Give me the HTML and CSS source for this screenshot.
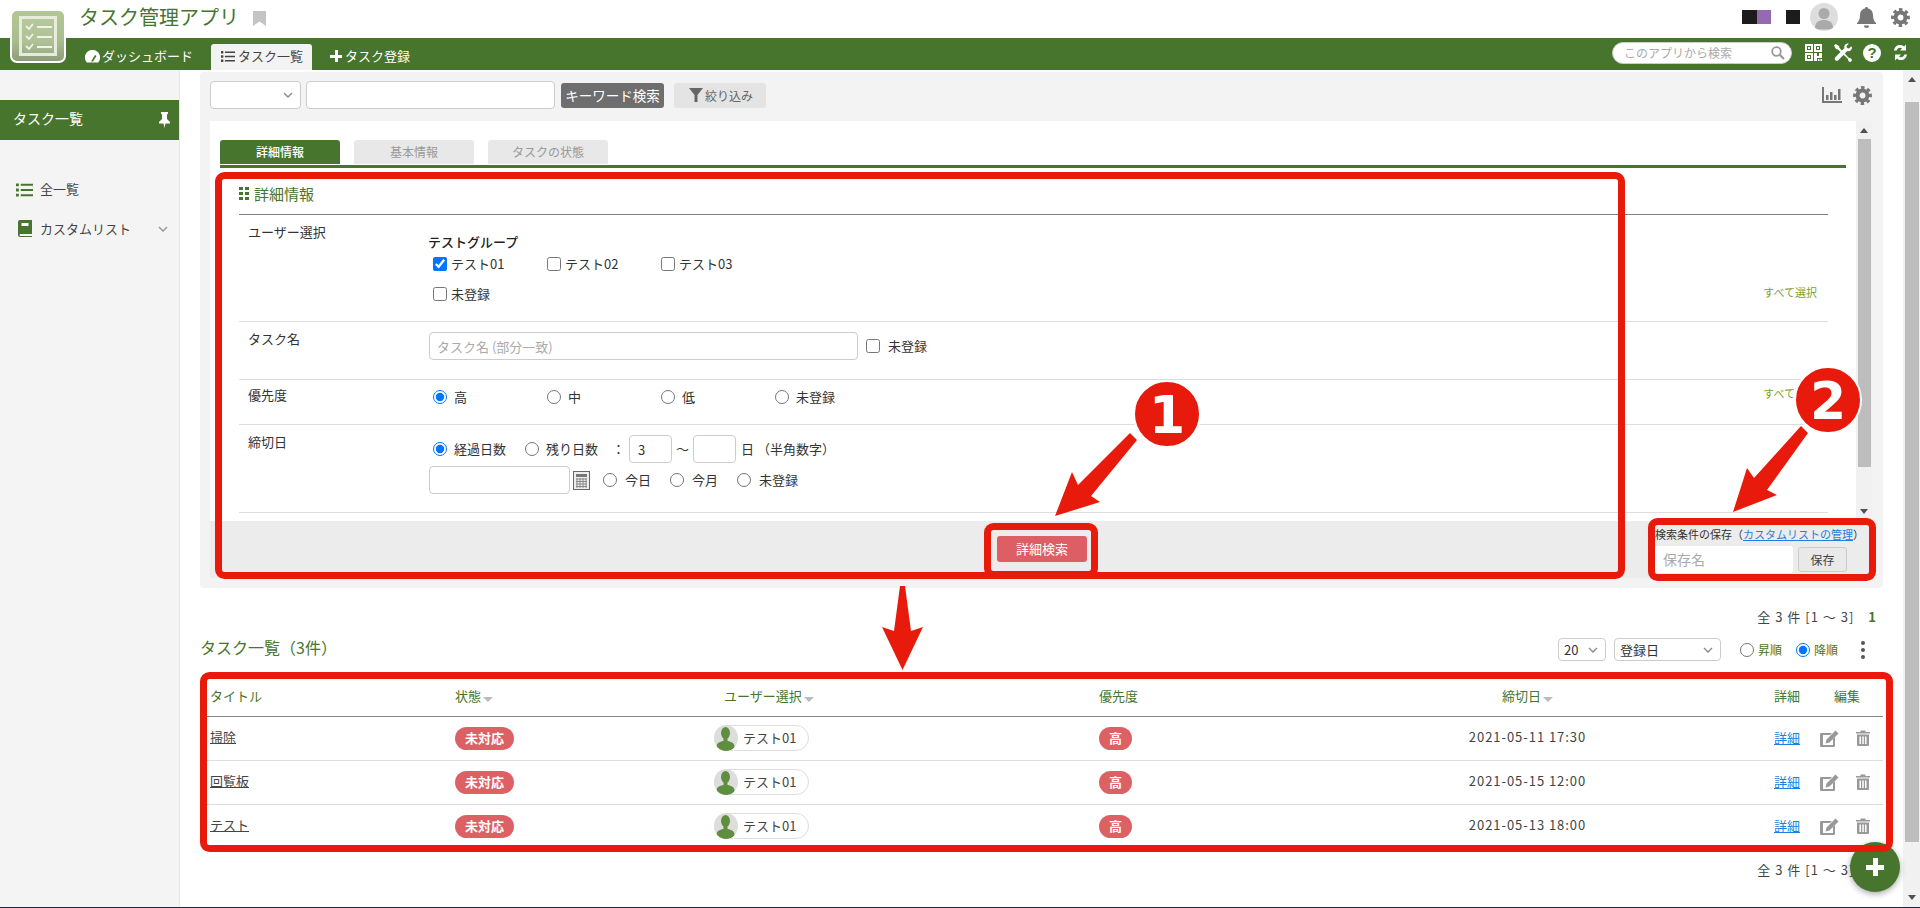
FILE: index.html
```html
<!DOCTYPE html>
<html lang="ja">
<head>
<meta charset="utf-8">
<title>タスク管理アプリ</title>
<link rel="stylesheet" href="styles.css">
</head>
<body>
<svg class="sprite" aria-hidden="true">
  <symbol id="gear" viewBox="0 0 20 20"><circle cx="10" cy="10" r="5.2" fill="none" stroke="currentColor" stroke-width="4.2"/><circle cx="10" cy="10" r="8" fill="none" stroke="currentColor" stroke-width="3.8" stroke-dasharray="3.4 2.88" transform="rotate(-12 10 10)"/></symbol>
  <symbol id="list" viewBox="0 0 18 14"><path d="M0 0h3v3H0zM0 5.5h3v3H0zM0 11h3v3H0zM5 .5h13v2H5zM5 6h13v2H5zM5 11.500h13v2H5z" fill="currentColor"/></symbol>
  <symbol id="edit" viewBox="0 0 19 17"><path d="M2 3h10l-2 2H3v10h10V9l2-2v9a1 1 0 0 1-1 1H1a1 1 0 0 1-1-1V4a1 1 0 0 1 1-1z" fill="currentColor"/><path d="M15.500 0.500 18.500 3.500 9.500 12.500 5.500 13.500 6.500 9.500z" fill="currentColor"/></symbol>
  <symbol id="trash" viewBox="0 0 14 16"><path d="M0 2h4.500V.5h5V2H14v1.500H0zM1 4.500h12V15a1 1 0 0 1-1 1H2a1 1 0 0 1-1-1zM3.500 6.500v7.500h1.500V6.500zM6.300 6.500v7.500h1.500V6.500zM9 6.500v7.500h1.500V6.500z" fill="currentColor" fill-rule="evenodd"/></symbol>
  <symbol id="person" viewBox="0 0 23 26"><ellipse cx="11.500" cy="8" rx="4.500" ry="6" fill="currentColor"/><path d="M9.500 13h4v3c4 .5 7 2.500 7 5.500S16.500 26 11.500 26 2.500 24.500 2.500 21.500 5.500 16.500 9.500 16z" fill="currentColor"/></symbol>
</svg>

<header class="topbar">
  <div class="app-title">タスク管理アプリ</div>
  <svg class="bookmark" viewBox="0 0 13 15"><path d="M0 0h13v15L6.500 10.500 0 15z" fill="#c4c4c4"/></svg>
  <div class="top-right">
    <span class="sq sq-dark"></span><span class="sq sq-purple"></span>
    <span class="sq sq-dark sq-gap"></span>
    <span class="avatar"><svg viewBox="0 0 28 28"><circle cx="14" cy="10.500" r="5.500" fill="#aaa"/><path d="M5 25c0-6 4-8 9-8s9 2 9 8c-2 2-16 2-18 0z" fill="#aaa"/></svg></span>
    <svg class="ic-bell" viewBox="0 0 19 21"><path d="M9.500 0c1 0 1.500.7 1.500 1.500 3.500.7 5 3.500 5 7 0 3.500 1 5.500 3 7.500v1H0v-1c2-2 3-4 3-7.500s1.500-6.300 5-7C8 .7 8.500 0 9.500 0z" fill="#777"/><path d="M7 18.500h5a2.500 2.500 0 0 1-5 0z" fill="#777"/></svg>
    <svg class="ic-gear"><use href="#gear"/></svg>
  </div>
</header>

<nav class="navbar">
  <a class="nav-item"><svg class="ic-gauge" viewBox="0 0 15 13"><path d="M7.500 0A7.500 7.500 0 0 0 1.800 12.500h11.400A7.500 7.500 0 0 0 7.500 0z" fill="#fff"/><path d="M6 11.500 10 5l1.500 1-3.500 5.500z" fill="#47752d"/></svg>ダッシュボード</a>
  <a class="nav-item nav-active"><svg class="ic-nav-list"><use href="#list"/></svg>タスク一覧</a>
  <a class="nav-item nav-add"><span class="plus"></span>タスク登録</a>
  <div class="nav-right">
    <div class="app-search"><span>このアプリから検索</span>
      <svg viewBox="0 0 14 14"><circle cx="5.500" cy="5.500" r="4.300" fill="none" stroke="#999" stroke-width="1.800"/><path d="M8.700 8.700 13 13" stroke="#999" stroke-width="2.200"/></svg>
    </div>
    <svg class="ic-qr" viewBox="0 0 17 17"><path fill-rule="evenodd" fill="#fff" d="M0 0h8v8H0zM2 2v4h4V2zM9 0h8v8H9zM11 2v4h4V2zM0 9h8v8H0zM2 11v4h4v-4zM9 9h3v3h2V9h3v5h-5v3H9zM13 15h1.500v2H13zM15.500 15H17v2h-1.500z"/><path fill="#fff" d="M3 3h2v2H3zM12 3h2v2h-2zM3 12h2v2H3z"/></svg>
    <svg class="ic-tools" viewBox="0 0 20 20"><path d="M1 2.500 2.500 1 6 3l.5 2L16 15c1.500-.5 3 1 3 2.500l-1.500 1.500c-1.500 0-3-1.500-2.500-3L5 6.500l-2-.5z" fill="#fff"/><path d="M19 4.500c0 2.500-2.500 4.300-4.700 3.500L5 17.500A2.200 2.200 0 0 1 2 14.500L11.500 5C10.700 2.800 12.500.5 15 .5l.8.2-2.300 2.300.5 2 2 .5 2.300-2.300z" fill="#fff"/></svg>
    <svg class="ic-help" viewBox="0 0 18 18"><circle cx="9" cy="9" r="9" fill="#fff"/><text x="9" y="14" text-anchor="middle" class="help-q">?</text></svg>
    <svg class="ic-sync" viewBox="0 0 15 17"><path d="M1 6.500C1.500 3 4 1 7 1c1.500 0 3 .5 4 1.500L13 .5V6.500H7l2-2C8.500 4 7.800 3.700 7 3.700 5.500 3.700 4 4.800 3.700 6.500z" fill="#fff"/><path d="M14 10.500C13.500 14 11 16 8 16c-1.500 0-3-.5-4-1.500L2 16.500V10.500h6l-2 2c.5.500 1.200.8 2 .8 1.500 0 3-1.100 3.300-2.800z" fill="#fff"/></svg>
  </div>
</nav>

<div class="logo">
  <div class="logo-inner">
    <svg viewBox="0 0 28 30"><g fill="none" stroke="#f1f3e8" stroke-width="1.800"><path d="M1 5l3 3 4-5M1 15l3 3 4-5M1 25l3 3 4-5"/><path d="M12 6h15M12 16h15M12 26h15"/></g></svg>
  </div>
</div>

<div class="layout">
  <aside class="sidebar">
    <div class="side-head"><span>タスク一覧</span>
      <svg viewBox="0 0 11 16"><path d="M2 0h7v1.500L8 2.500V7l3 3v1.500H6.500L5.500 16l-1-4.500H0V10l3-3V2.500L2 1.500z" fill="#fff"/></svg>
    </div>
    <ul class="side-list">
      <li><svg class="ic-side-list"><use href="#list"/></svg>全一覧</li>
      <li><svg class="ic-book" viewBox="0 0 14 17"><path d="M2 0h12v14H2.500a1 1 0 0 0 0 2H14v1H2a2 2 0 0 1-2-2V2a2 2 0 0 1 2-2z" fill="#47752d"/><rect x="3.500" y="3" width="7" height="3" fill="#fff"/></svg>カスタムリスト
        <svg class="chev" viewBox="0 0 10 6"><path d="M1 1l4 4 4-4" fill="none" stroke="#999" stroke-width="1.500"/></svg></li>
    </ul>
  </aside>

  <main class="main">
    <section class="panel">
      <div class="toolbar">
        <select class="sel kw-select"><option></option></select>
        <input class="kw-input" type="text">
        <button class="btn-kw">キーワード検索</button>
        <button class="btn-filter"><svg viewBox="0 0 14 14"><path d="M0 0h14L8.500 7v7h-3V7z" fill="#666"/></svg>絞り込み</button>
        <div class="tool-right">
          <svg class="ic-chart" viewBox="0 0 20 16"><path d="M0 0h2v14h18v2H0z" fill="#777"/><path d="M4 8h2.500v5H4zM8 5h2.500v8H8zM12 8h2.500v5H12zM16 2h2.500v11H16z" fill="#777"/></svg>
          <svg class="ic-gear"><use href="#gear"/></svg>
        </div>
      </div>

      <div class="detail">
        <div class="detail-scroll">
          <div class="tabs">
            <a class="tab tab-on">詳細情報</a>
            <a class="tab">基本情報</a>
            <a class="tab">タスクの状態</a>
          </div>
          <div class="section">
            <h2 class="sec-title"><svg viewBox="0 0 10 13"><path d="M0 0h4v3H0zM6 0h4v3H6zM0 5h4v3H0zM6 5h4v3H6zM0 10h4v3H0zM6 10h4v3H6z" fill="#47752d"/></svg>詳細情報</h2>

            <div class="row r-user">
              <div class="label">ユーザー選択</div>
              <div class="field">
                <div class="group-name">テストグループ</div>
                <div class="opts">
                  <label class="opt opt-c"><input type="checkbox" checked>テスト01</label>
                  <label class="opt opt-c"><input type="checkbox">テスト02</label>
                  <label class="opt opt-c"><input type="checkbox">テスト03</label>
                </div>
                <div class="opts opts-2"><label class="opt opt-c"><input type="checkbox">未登録</label></div>
              </div>
              <a class="select-all sa-user">すべて選択</a>
            </div>

            <div class="row r-name">
              <div class="label">タスク名</div>
              <div class="field field-name">
                <input class="name-input" type="text" placeholder="タスク名 (部分一致)">
                <label class="opt-c opt-none"><input type="checkbox">未登録</label>
              </div>
            </div>

            <div class="row r-pri">
              <div class="label lb-pri">優先度</div>
              <div class="field">
                <div class="opts">
                  <label class="opt"><input type="radio" name="p" checked>高</label>
                  <label class="opt"><input type="radio" name="p">中</label>
                  <label class="opt"><input type="radio" name="p">低</label>
                  <label class="opt"><input type="radio" name="p">未登録</label>
                </div>
              </div>
              <a class="select-all sa-pri">すべて選択</a>
            </div>

            <div class="row r-due">
              <div class="label">締切日</div>
              <div class="field field-due">
                <div class="due-line">
                  <label class="opt-r"><input type="radio" name="d" checked>経過日数</label>
                  <label class="opt-r gap-l"><input type="radio" name="d">残り日数</label>
                  <span class="colon">：</span>
                  <input class="num" type="text" value="3">
                  <span class="tilde">〜</span>
                  <input class="num" type="text">
                  <span class="day">日</span>
                  <span class="hint">（半角数字）</span>
                </div>
                <div class="due-line">
                  <input class="date-input" type="text">
                  <svg class="ic-cal" viewBox="0 0 18 19"><rect x=".5" y=".5" width="16" height="18" fill="#eee" stroke="#666"/><rect x="3" y="3" width="11" height="3" fill="#777"/><path d="M3 8h11M3 10.500h11M3 13h11M3 15.500h11M4 7v10M7 7v10M10 7v10M13 7v10" stroke="#888" fill="none"/></svg>
                  <label class="opt-r m-today"><input type="radio" name="e">今日</label>
                  <label class="opt-r m-month"><input type="radio" name="e">今月</label>
                  <label class="opt-r m-month"><input type="radio" name="e">未登録</label>
                </div>
              </div>
            </div>
          </div>
        </div>
        <div class="sb sb-inner"><i class="arr-up"></i><b class="thumb"></b><i class="arr-down"></i></div>
      </div>

      <div class="panel-foot">
        <span></span>
        <button class="btn-detail">詳細検索</button>
        <div class="save">
          <div class="save-text">検索条件の保存（<a>カスタムリストの管理</a>）</div>
          <div class="save-line">
            <input class="save-input" type="text" placeholder="保存名">
            <button class="btn-save">保存</button>
          </div>
        </div>
      </div>
    </section>

    <div class="pager"><span>全 3 件 [1 〜 3]</span><b>1</b></div>

    <div class="list-head">
      <h1 class="list-title">タスク一覧（3件）</h1>
      <div class="list-ctrl">
        <select class="sel sel-num"><option>20</option></select>
        <select class="sel sel-sort"><option>登録日</option></select>
        <label class="sort-r"><input type="radio" name="o">昇順</label>
        <label class="sort-r"><input type="radio" name="o" checked>降順</label>
        <span class="kebab"><i></i><i></i><i></i></span>
      </div>
    </div>

    <table class="tasks">
      <colgroup><col class="c1"><col class="c2"><col class="c3"><col class="c4"><col class="c5"><col class="c6"><col class="c7"></colgroup>
      <thead>
        <tr><th class="t-title">タイトル</th><th>状態<i class="sort"></i></th><th class="t-user">ユーザー選択<i class="sort"></i></th><th>優先度</th><th class="t-date">締切日<i class="sort"></i></th><th>詳細</th><th class="t-edit">編集</th></tr>
      </thead>
      <tbody>
        <tr><td class="t-title"><a>掃除</a></td><td><span class="badge">未対応</span></td><td><span class="pill"><span class="pill-av"><svg><use href="#person"/></svg></span>テスト01</span></td><td><span class="badge badge-s">高</span></td><td class="t-date date">2021-05-11 17:30</td><td><a class="link">詳細</a></td><td><span class="acts"><svg class="ic-edit"><use href="#edit"/></svg><svg class="ic-trash"><use href="#trash"/></svg></span></td></tr>
        <tr><td class="t-title"><a>回覧板</a></td><td><span class="badge">未対応</span></td><td><span class="pill"><span class="pill-av"><svg><use href="#person"/></svg></span>テスト01</span></td><td><span class="badge badge-s">高</span></td><td class="t-date date">2021-05-15 12:00</td><td><a class="link">詳細</a></td><td><span class="acts"><svg class="ic-edit"><use href="#edit"/></svg><svg class="ic-trash"><use href="#trash"/></svg></span></td></tr>
        <tr><td class="t-title"><a>テスト</a></td><td><span class="badge">未対応</span></td><td><span class="pill"><span class="pill-av"><svg><use href="#person"/></svg></span>テスト01</span></td><td><span class="badge badge-s">高</span></td><td class="t-date date">2021-05-13 18:00</td><td><a class="link">詳細</a></td><td><span class="acts"><svg class="ic-edit"><use href="#edit"/></svg><svg class="ic-trash"><use href="#trash"/></svg></span></td></tr>
      </tbody>
    </table>

    <div class="pager pager-b"><span>全 3 件 [1 〜 3]</span><b>1</b></div>
  </main>

  <div class="sb sb-main"><i class="arr-up"></i><b class="thumb"></b><i class="arr-down"></i></div>
</div>

<button class="fab" aria-label="追加"><span class="fab-plus"></span></button>

<svg class="annot" viewBox="0 0 1920 908" aria-hidden="true">
  <g fill="none" stroke="#e81a0c" stroke-width="7">
    <rect x="218.500" y="175.500" width="1403" height="400" rx="6"/>
    <rect x="987.500" y="526.500" width="107" height="48" rx="6"/>
    <rect x="1651.500" y="521.500" width="221" height="56" rx="6"/>
    <rect x="203.500" y="675.500" width="1686" height="173" rx="6"/>
  </g>
  <g fill="#e81a0c">
    <polygon points="1137,440 1091,496 1100,502 1055,516 1072,472 1078,485 1130,433"/>
    <polygon points="1808,433 1767,490 1777,495 1733,512 1747,468 1754,478 1801,426"/>
    <polygon points="900,586 905,586 911,631 923,627 902.500,670 882,627 894,631"/>
    <circle cx="1167" cy="414" r="33" stroke="#fff" stroke-width="2"/>
    <circle cx="1828" cy="400" r="33" stroke="#fff" stroke-width="2"/>
  </g>
  <text x="1167" y="433" class="num-mark">1</text>
  <text x="1828" y="419" class="num-mark">2</text>
</svg>
</body>
</html>
```
FILE: styles.css
```css
* { box-sizing: border-box; }
html, body { margin: 0; padding: 0; }
body {
  position: relative;
  width: 1920px;
  height: 908px;
  overflow: hidden;
  background: #fff;
  color: #333;
  font-family: "Noto Sans CJK JP", "Noto Sans", sans-serif;
  font-size: 13px;
  line-height: 20px;
  border-bottom: 1px solid #1c2a40;
}
input, select, button { font-family: inherit; font-size: 13px; color: #333; margin: 0; }
input[type="checkbox"], input[type="radio"] { width: 14px; height: 14px; margin: 0; flex: none; }
h1, h2 { margin: 0; font-weight: normal; }
ul { list-style: none; margin: 0; padding: 0; }
.sprite { position: absolute; width: 0; height: 0; }
svg { display: block; flex: none; }
.sel {
  appearance: none;
  background: #fff url("data:image/svg+xml,%3Csvg xmlns='http://www.w3.org/2000/svg' width='10' height='6'%3E%3Cpath d='M1 1l4 4 4-4' fill='none' stroke='%23888' stroke-width='1.300'/%3E%3C/svg%3E") no-repeat right 7px center;
}

/* header */
.topbar { height: 38px; display: flex; align-items: center; padding: 0 10px 4px 79px; }
.app-title { font-size: 20px; color: #47752d; line-height: 30px; width: 174px; }
.bookmark { width: 13px; height: 15px; margin-top: 2px; }
.top-right { margin-left: auto; display: flex; align-items: center; color: #777; }
.sq { width: 15px; height: 14px; display: block; }
.sq-dark { background: #1c1c1c; }
.sq-purple { background: #946bb0; width: 14px; }
.sq-gap { margin-left: 15px; width: 14px; }
.avatar { width: 28px; height: 28px; border-radius: 50%; background: #ddd; margin-left: 10px; overflow: hidden; }
.avatar svg { width: 28px; height: 28px; }
.ic-bell { width: 19px; height: 21px; margin-left: 19px; }
.ic-gear { width: 19px; height: 19px; margin-left: 15px; color: #777; }

.navbar { height: 32px; background: #47752d; display: flex; align-items: flex-end; padding: 0 12px 0 85px; }
.nav-item { height: 26px; display: flex; align-items: center; color: #fff; font-size: 13px; padding-bottom: 2px; }
.ic-gauge { width: 15px; height: 13px; margin-right: 2px; }
.nav-active { margin-left: 18px; width: 101px; background: #f3f3f3; border-radius: 3px 3px 0 0; padding-left: 10px; color: #444; }
.ic-nav-list { width: 14px; height: 11px; margin-right: 3px; color: #444; }
.nav-add { margin-left: 18px; }
.plus { position: relative; width: 12px; height: 12px; margin-right: 3px; background: linear-gradient(#fff,#fff) center/12px 3px no-repeat, linear-gradient(#fff,#fff) center/3px 12px no-repeat; }
.nav-right { margin-left: auto; height: 32px; display: flex; align-items: center; padding-bottom: 3px; }
.app-search { width: 180px; height: 22px; border-radius: 11px; background: #fff; border: 1px solid #ccc; display: flex; align-items: center; justify-content: space-between; padding: 0 6px 0 11px; font-size: 12px; color: #aaa; }
.app-search svg { width: 14px; height: 14px; }
.ic-qr { width: 17px; height: 17px; margin-left: 13px; }
.ic-tools { width: 20px; height: 20px; margin-left: 11px; }
.ic-help { width: 18px; height: 18px; margin-left: 10px; }
.help-q { font: bold 15px "Liberation Sans", sans-serif; fill: #47752d; }
.ic-sync { width: 15px; height: 17px; margin-left: 12px; }

.logo { position: absolute; left: 10px; top: 9px; width: 56px; height: 54px; border: 2px solid #fff; border-radius: 7px; background: linear-gradient(#b3c795, #a9bc8e 60%, #8f9c7b); padding: 5px 7px; }
.logo-inner { height: 40px; border: 3px solid #e6ebda; padding: 2px 3px; background: rgba(255,255,255,.08); }
.logo-inner svg { width: 28px; height: 30px; }

/* layout */
.layout { display: flex; height: 837px; }
.sidebar { width: 180px; flex: none; background: #f4f4f4; border-right: 1px solid #e6e6e6; padding-top: 30px; }
.side-head { height: 40px; background: #47752d; color: #fff; font-size: 14px; display: flex; align-items: center; justify-content: space-between; padding: 0 9px 4px 13px; }
.side-head svg { width: 11px; height: 16px; margin-top: 4px; }
.side-list { margin-top: 30px; color: #444; }
.side-list li { height: 39px; display: flex; align-items: center; padding-left: 40px; position: relative; }
.side-list li:first-child { padding-bottom: 2px; }
.ic-side-list { position: absolute; left: 16px; top: 13px; width: 17px; height: 14px; color: #47752d; }
.ic-book { position: absolute; left: 18px; top: 11px; width: 14px; height: 17px; }
.chev { position: absolute; left: 158px; top: 17px; width: 10px; height: 6px; }

.main { flex: 1; min-width: 0; padding: 2px 20px 0 20px; }
.sb { background: #f1f1f1; display: flex; flex-direction: column; align-items: center; }
.sb-main { width: 17px; flex: none; }
.arr-up, .arr-down { display: block; width: 0; height: 0; border-left: 4px solid transparent; border-right: 4px solid transparent; }
.arr-up { border-bottom: 5px solid #505050; margin-top: 7px; }
.arr-down { border-top: 5px solid #505050; margin-top: auto; margin-bottom: 7px; }
.thumb { display: block; background: #bdbdbd; }
.sb-main .thumb { width: 14px; height: 740px; margin-top: 20px; }
.sb-inner .thumb { width: 13px; height: 328px; margin-top: 6px; }

/* search panel */
.panel { height: 516px; background: #f3f3f3; border-radius: 4px; padding: 0 11px 10px 10px; }
.toolbar { height: 49px; display: flex; align-items: center; padding-bottom: 3px; }
.kw-select { width: 91px; height: 28px; border: 1px solid #ccc; border-radius: 4px; }
.kw-input { width: 249px; height: 28px; margin-left: 5px; border: 1px solid #ccc; border-radius: 4px; background: #fff; }
.btn-kw { width: 103px; height: 25px; margin-left: 6px; background: #6e6e6e; color: #fff; border: 0; border-radius: 3px; padding: 0; font-size: 13.500px; }
.btn-filter { width: 92px; height: 25px; margin-left: 10px; background: #e4e4e4; color: #666; border: 0; border-radius: 3px; display: flex; align-items: center; padding: 0 0 0 15px; font-size: 12px; }
.btn-filter svg { width: 14px; height: 14px; margin-right: 2px; }
.tool-right { margin-left: auto; display: flex; align-items: center; }
.ic-chart { width: 20px; height: 16px; }
.tool-right .ic-gear { margin-left: 11px; }

.detail { height: 400px; background: #fff; display: flex; }
.detail-scroll { flex: 1; min-width: 0; padding: 19px 10px 0; }
.sb-inner { width: 16px; flex: none; }
.tabs { display: flex; gap: 14px; height: 28px; border-bottom: 3px solid #47752d; padding-bottom: 1px; }
.tab { width: 120px; height: 24px; background: #e8e8e8; color: #999; font-size: 12px; line-height: 24px; text-align: center; border-radius: 3px 3px 0 0; }
.tab-on { background: #47752d; color: #fff; font-weight: 500; }
.section { margin: 0 18px 0 19px; }
.sec-title { height: 47px; border-bottom: 1px solid #808080; color: #47752d; font-size: 15px; display: flex; align-items: center; padding-top: 5px; }
.sec-title svg { width: 10px; height: 13px; margin-right: 5px; }

.row { display: grid; grid-template-columns: 181px 1fr auto; padding-left: 9px; border-bottom: 1px solid #ddd; }
.r-user { height: 107px; }
.r-name { height: 58px; }
.r-pri { height: 45px; }
.r-due { height: 88px; }
.label { padding-top: 7px; color: #333; }
.lb-pri { padding-top: 5px; }
.group-name { margin: 17px 0 0 -1px; font-weight: 500; color: #222; }
.opts { display: flex; padding-left: 4px; margin-top: 2px; }
.r-pri .opts { margin-top: 7px; }
.opts-2 { margin-top: 10px; }
.opt { width: 114px; display: flex; align-items: center; gap: 7px; }
.opt-c { gap: 4px; display: flex; align-items: center; }
.select-all { font-size: 11px; color: #7ba02c; padding-right: 11px; }
.sa-user { align-self: end; margin-bottom: 19px; }
.sa-pri { padding-top: 3px; }

.field-name { display: flex; align-items: flex-start; padding-top: 10px; }
.name-input { width: 429px; height: 28px; border: 1px solid #ccc; border-radius: 4px; padding: 0 7px; }
.name-input::placeholder, .save-input::placeholder { color: #aaa; }
.opt-none { margin: 4px 0 0 8px; gap: 8px; height: 20px; }

.field-due { padding-top: 10px; }
.due-line { display: flex; align-items: center; height: 28px; margin-bottom: 3px; }
.opt-r { display: flex; align-items: center; gap: 7px; margin-left: 4px; }
.gap-l { margin-left: 19px; }
.colon { margin-left: 14px; }
.num { width: 43px; height: 28px; border: 1px solid #ccc; border-radius: 4px; padding: 0 8px; margin-left: 4px; }
.tilde { margin-left: 4px; }
.day { margin-left: 5px; }
.hint { margin-left: 3px; }
.date-input { width: 141px; height: 28px; border: 1px solid #ccc; border-radius: 4px; }
.ic-cal { width: 18px; height: 19px; margin-left: 3px; }
.m-today { margin-left: 12px; gap: 8px; }
.m-month { margin-left: 19px; gap: 8px; }

.panel-foot { height: 57px; background: #ececec; display: grid; grid-template-columns: 1fr auto 1fr; align-items: center; }
.btn-detail { width: 90px; height: 26px; margin: 0 0 2px 2px; background: #dd5f65; color: #fff; border: 0; border-radius: 3px; padding: 0; font-size: 13px; }
.save { justify-self: end; width: 217px; }
.save-text { font-size: 11px; line-height: 14px; white-space: nowrap; color: #333; }
.save-text a { color: #1e7fe0; text-decoration: underline; }
.save-line { display: flex; align-items: center; margin-top: 5px; }
.save-input { width: 138px; height: 27px; border: 0; border-radius: 3px; background: #fff; padding: 0 8px; font-size: 14px; }
.btn-save { width: 49px; height: 25px; margin-left: 5px; background: #e9e9e9; border: 1px solid #ccc; border-radius: 3px; padding: 0; font-size: 12px; color: #444; }

/* list */
.pager { margin-top: 17px; height: 24px; display: flex; justify-content: flex-end; align-items: center; padding-right: 6px; font-size: 13px; color: #444; letter-spacing: 1px; }
.pager b { color: #47752d; margin-left: 14px; }
.pager-b { margin-top: 9px; }
.list-head { height: 32px; padding-top: 9px; display: flex; justify-content: space-between; align-items: flex-start; }
.list-title { font-size: 16px; color: #47752d; line-height: 18px; }
.list-ctrl { display: flex; align-items: center; height: 23px; padding-right: 18px; }
.sel-num { width: 48px; height: 23px; border: 1px solid #ccc; border-radius: 4px; padding-left: 5px; }
.sel-sort { width: 107px; height: 23px; margin-left: 8px; border: 1px solid #ccc; border-radius: 4px; padding-left: 5px; }
.sort-r { display: flex; align-items: center; gap: 4px; margin-left: 19px; color: #47752d; font-size: 12px; }
.sort-r + .sort-r { margin-left: 14px; }
.kebab { margin-left: 23px; display: flex; flex-direction: column; gap: 3px; }
.kebab i { display: block; width: 4px; height: 4px; border-radius: 50%; background: #555; }

.tasks { margin: 18px 0 0 7px; width: 1676px; table-layout: fixed; border-collapse: collapse; }
.c1 { width: 248px; } .c2 { width: 259px; } .c3 { width: 385px; } .c4 { width: 270px; } .c5 { width: 405px; } .c6 { width: 46px; } .c7 { width: 63px; }
.tasks th { height: 37px; padding: 0 0 2px; border-bottom: 1px solid #888; color: #47752d; font-weight: normal; text-align: left; }
.tasks td { height: 44px; padding: 0; border-bottom: 1px solid #ddd; }
.tasks th.t-title, .tasks td.t-title { padding-left: 3px; }
.tasks th.t-user { padding-left: 10px; }
.tasks th.t-date, .tasks td.t-date { text-align: center; padding-right: 88px; }
.tasks td.t-title, .tasks td.t-date { padding-bottom: 2px; }
.tasks th.t-edit { padding-left: 14px; }
.t-title a { color: #444; text-decoration: underline; }
.date { color: #444; letter-spacing: .95px; }
.sort { display: inline-block; margin-left: 2px; vertical-align: -1px; width: 0; height: 0; border-left: 5px solid transparent; border-right: 5px solid transparent; border-top: 5px solid #bbb; }
.badge { display: inline-block; width: 59px; height: 23px; line-height: 22px; text-align: center; border-radius: 12px; background: #dd6065; color: #fff; font-weight: bold; font-size: 13px; vertical-align: middle; }
.badge-s { width: 33px; }
.pill { display: inline-flex; align-items: center; width: 95px; height: 26px; border: 1px solid #ddd; border-radius: 13px; vertical-align: middle; color: #444; }
.pill-av { width: 24px; height: 26px; margin: -1px 5px -1px -1px; border-radius: 50%; background: #ddd; color: #5f8f3e; overflow: hidden; }
.pill-av svg { width: 23px; height: 26px; }
.link { color: #1e7fe0; text-decoration: underline; }
.acts { display: flex; align-items: center; color: #999; }
.ic-edit { width: 19px; height: 17px; }
.ic-trash { width: 14px; height: 16px; margin-left: 17px; }

.fab { position: absolute; right: 20px; bottom: 15px; width: 50px; height: 50px; border-radius: 50%; border: 0; background: #47752d; box-shadow: 0 2px 6px rgba(0,0,0,.35); padding: 0; }
.fab-plus { display: block; width: 18px; height: 18px; margin: auto; background: linear-gradient(#fff,#fff) center/18px 5px no-repeat, linear-gradient(#fff,#fff) center/5px 18px no-repeat; }

/* callouts drawn over the screenshot */
.annot { position: absolute; left: 0; top: 0; width: 1920px; height: 908px; pointer-events: none; }
.num-mark { font: bold 52px "DejaVu Sans", sans-serif; fill: #fff; text-anchor: middle; }
```
